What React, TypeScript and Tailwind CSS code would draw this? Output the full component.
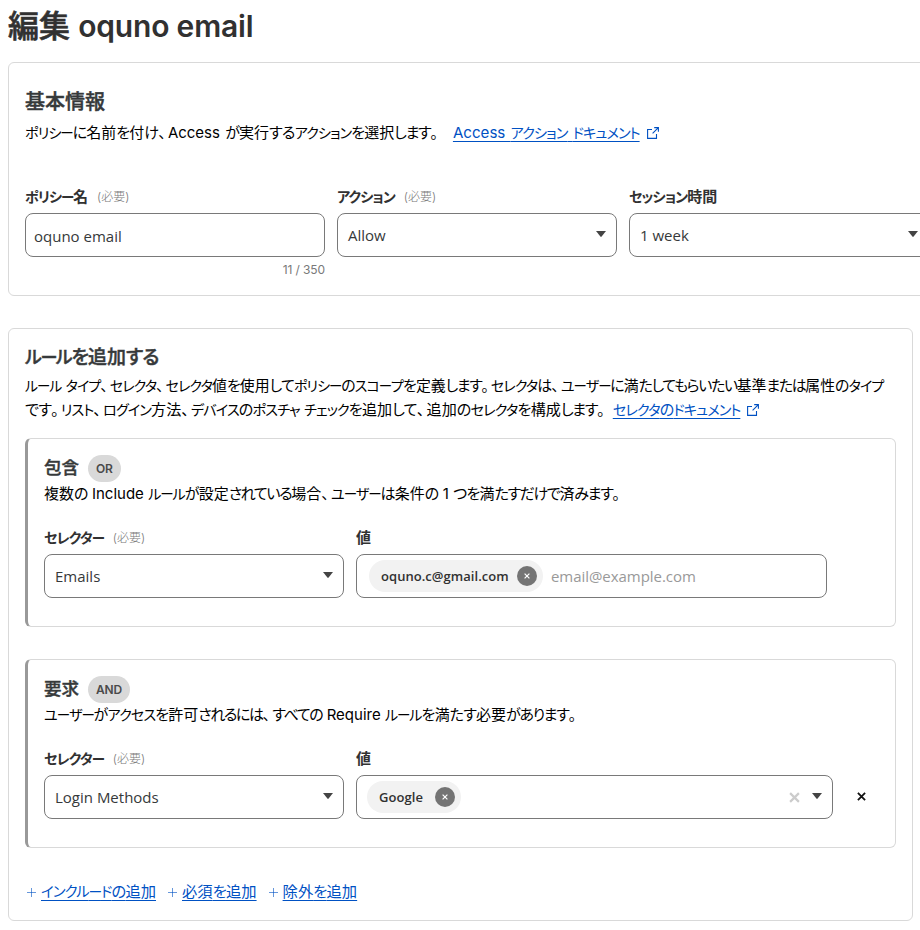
import React from 'react';
import clsx from 'clsx';

// Narrow kana setting: each script run gets its own size and tracking
const RUNS = /[ァィゥェォャュョッ]+|ー+|[ァ-ヺ]+|[ぁ-ん]+|[、。]|[^ァ-ヺーぁ-ん、。]+/g;

const runClass = (run: string) => {
    if (/^[ァィゥェォャュョッ]/.test(run)) return 'text-[0.95em]';
    if (run[0] === 'ー') return 'text-[0.9em] tracking-[-0.09em]';
    if (/^[ァ-ヺ]/.test(run)) return 'text-[0.94em] tracking-[-0.065em]';
    if (/^[ぁ-ん]{3}/.test(run)) return 'tracking-[-0.09em]';
    if (/^[ぁ-ん]/.test(run)) return 'tracking-[-0.05em]';
    if (/^[、。]/.test(run)) return 'tracking-[0.14em]';
    return undefined;
};

const Ja: React.FC<{ children: string }> = ({ children }) => (
    <>
        {(children.match(RUNS) || []).map((run, i) => (
            <span key={i} className={runClass(run)}>{run}</span>
        ))}
    </>
);

const Caret: React.FC = () => (
    <svg className="mb-0.5 shrink-0" width="10" height="6" viewBox="0 0 10 6" fill="#444">
        <path d="M0 0h10L5.6 5.6a.8.8 0 0 1-1.2 0z" />
    </svg>
);

const Cross: React.FC<{ size: number; color: string; stroke?: number }> = ({ size, color, stroke = 2 }) => (
    <svg className="shrink-0" width={size} height={size} viewBox="0 0 10 10" stroke={color} strokeWidth={stroke} fill="none">
        <path d="M1 1l8 8M9 1l-8 8" />
    </svg>
);

const ExternalIcon: React.FC = () => (
    <svg className="ml-[7px] inline-block align-[-1px]" width="12" height="12" viewBox="0 0 12 12" fill="none" stroke="#0051c3" strokeWidth="1.1">
        <path d="M5 2.5H.6v8.9h8.9V7M7.2.6h4.2v4.2M11.4.6L5.6 6.4" />
    </svg>
);

const Label: React.FC<{ text: string; required?: boolean }> = ({ text, required }) => (
    <div className="flex h-5 items-center leading-5">
        <span className="text-[15px] font-semibold text-[#313131]"><Ja>{text}</Ja></span>
        {required && <span className="ml-[9px] text-[12px] font-light text-[#797979]">(必要)</span>}
    </div>
);

const Select: React.FC<{ value: string; className: string }> = ({ value, className }) => (
    <div className={clsx('mt-1.5 flex h-11 items-center justify-between rounded-lg border border-[#797979] pr-2.5 pl-2.5', className)}>
        <span className="font-['Open_Sans'] text-[15px] text-[#36393a]">{value}</span>
        <Caret />
    </div>
);

const Chip: React.FC<{ text: string; className: string }> = ({ text, className }) => (
    <span className={clsx('flex h-8 items-center justify-between rounded-full bg-[#f2f2f2] pr-1.5 pl-3', className)}>
        <span className="pt-px font-['Open_Sans'] text-[13px] font-semibold tracking-[0.05px] text-[#313131]">{text}</span>
        <span className="flex size-5 items-center justify-center rounded-full bg-[#747474]">
            <Cross size={6} color="#fff" />
        </span>
    </span>
);

const RuleCard: React.FC<{ title: string; badge: string; description: string; children: React.ReactNode }> = ({ title, badge, description, children }) => (
    <div className="h-[189px] rounded-md border border-l-[3px] border-[#d9d9d9] border-l-[#999] pt-4 pl-4">
        <div className="flex h-[27px] items-center">
            <h3 className="text-[17.5px] font-medium text-[#36393a] [-webkit-text-stroke:0.4px]">{title}</h3>
            <span className="ml-[9px] flex h-[27px] items-center rounded-full bg-[#d9d9d9] px-2 text-[12px] font-semibold tracking-[-0.2px] text-[#4a4a4a]">{badge}</span>
        </div>
        <p className="h-6 text-[15px] leading-6 whitespace-nowrap"><Ja>{description}</Ja></p>
        <div className="mt-[22px] flex gap-3">{children}</div>
    </div>
);

const AddLink: React.FC<{ text: string }> = ({ text }) => (
    <span className="flex items-center gap-1">
        <svg width="11" height="11" viewBox="0 0 11 11" stroke="#0051c3" strokeOpacity="0.6" fill="none">
            <path d="M5.5 1v9M1 5.5h9" />
        </svg>
        <a className="underline underline-offset-[3px]"><Ja>{text}</Ja></a>
    </span>
);

const App: React.FC = () => (
    <main
        lang="ja"
        className="h-[930px] w-[920px] overflow-hidden bg-white pl-2 font-[Inter,'Noto_Sans_CJK_JP',sans-serif] text-black [font-feature-settings:'palt']"
    >
        <h1 className="h-[62px] pt-1.5 text-[31px] leading-10 font-medium whitespace-nowrap text-[#313131]">
            <span className="[-webkit-text-stroke:0.6px]">編集</span> <span className="text-[30px] font-semibold tracking-[-0.2px]">oquno email</span>
        </h1>

        <section className="h-[234px] w-[1000px] rounded-md border border-[#d9d9d9] pt-6 pl-4">
            <h2 className="text-[20px] leading-[30px] font-medium text-[#36393a] [-webkit-text-stroke:0.45px]">基本情報</h2>
            <p className="mt-0.5 h-6 text-[15px] leading-7 whitespace-nowrap [word-spacing:1px]">
                <Ja>ポリシーに名前を付け、Access が実行するアクションを選択します。</Ja>
                <a className="ml-[13px] text-[15.1px] text-[#0051c3] underline underline-offset-[3px]"><Ja>Access アクション ドキュメント</Ja></a>
                <ExternalIcon />
            </p>
            <div className="mt-[44px] flex gap-3">
                <div className="w-[300px]">
                    <Label text="ポリシー名" required />
                    <div className="mt-1.5 flex h-11 items-center rounded-lg border border-[#797979] px-2 pt-0.5 font-['Open_Sans'] text-[15px] text-[#36393a]">oquno email</div>
                    <div className="mt-1 text-right text-[12px] leading-[18px] tracking-[-0.1px] text-[#797979]">11 / 350</div>
                </div>
                <div className="w-[280px]">
                    <Label text="アクション" required />
                    <Select value="Allow" className="w-full" />
                </div>
                <div className="w-[300px]">
                    <Label text="セッション時間" />
                    <Select value="1 week" className="w-full" />
                </div>
            </div>
        </section>

        <section className="mt-8 h-[593px] w-[905px] rounded-md border border-[#d9d9d9] px-4 pt-[14px]">
            <h2 className="text-[19px] leading-[30px] font-medium text-[#36393a] [-webkit-text-stroke:0.45px]"><Ja>ルールを追加する</Ja></h2>
            <p className="mt-px h-12 text-[15px] leading-6 whitespace-nowrap">
                <span className="block h-6 text-[14.9px]"><Ja>ルール タイプ、セレクタ、セレクタ値を使用してポリシーのスコープを定義します。セレクタは、ユーザーに満たしてもらいたい基準または属性のタイプ</Ja></span>
                <span className="text-[15.1px]"><Ja>です。リスト、ログイン方法、デバイスのポスチャ チェックを追加して、追加のセレクタを構成します。</Ja></span>
                <a className="ml-1.5 text-[15.1px] text-[#0051c3] underline underline-offset-[3px]"><Ja>セレクタのドキュメント</Ja></a>
                <ExternalIcon />
            </p>
            <div className="mt-4 flex flex-col gap-8">
                <RuleCard title="包含" badge="OR" description="複数の Include ルールが設定されている場合、ユーザーは条件の 1 つを満たすだけで済みます。">
                    <div>
                        <Label text="セレクター" required />
                        <Select value="Emails" className="w-[300px]" />
                    </div>
                    <div>
                        <Label text="値" />
                        <div className="mt-1.5 flex h-11 w-[471px] items-center rounded-lg border border-[#797979] pl-3">
                            <Chip text="oquno.c@gmail.com" className="w-[174px]" />
                            <span className="ml-2 font-['Open_Sans'] text-[15px] tracking-[-0.05px] text-[#999]">email@example.com</span>
                        </div>
                    </div>
                </RuleCard>
                <RuleCard title="要求" badge="AND" description="ユーザーがアクセスを許可されるには、すべての Require ルールを満たす必要があります。">
                    <div>
                        <Label text="セレクター" required />
                        <Select value="Login Methods" className="w-[300px]" />
                    </div>
                    <div>
                        <Label text="値" />
                        <div className="mt-1.5 flex h-11 w-[477px] items-center rounded-lg border border-[#797979] pr-2.5 pl-2.5">
                            <Chip text="Google" className="w-[94px]" />
                            <span className="mr-3 ml-auto"><Cross size={11} color="#ccc" /></span>
                            <Caret />
                        </div>
                    </div>
                    <div className="mt-[25px] ml-3 flex h-11 items-center">
                        <Cross size={9} color="#111" />
                    </div>
                </RuleCard>
            </div>
            <div className="mt-8 ml-px flex gap-[11px] text-[15.3px] leading-6 text-[#0051c3]">
                <AddLink text="インクルードの追加" />
                <AddLink text="必須を追加" />
                <AddLink text="除外を追加" />
            </div>
        </section>
    </main>
);

export default App;
